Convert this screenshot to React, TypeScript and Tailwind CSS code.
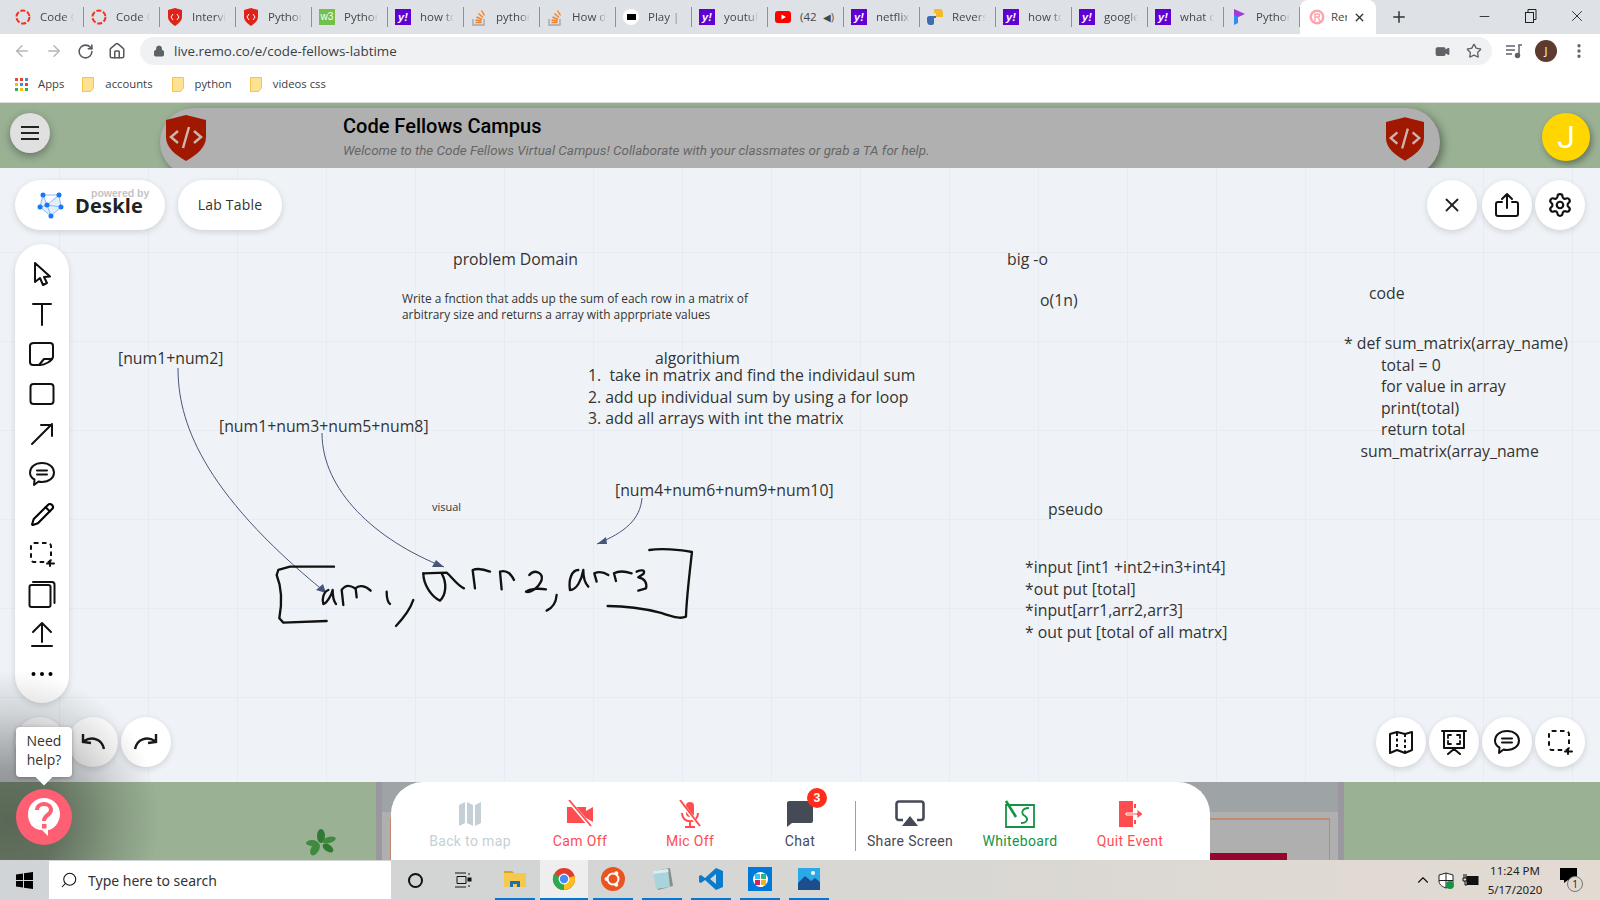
import { ArrowLeft, ArrowRight, ChevronUp, Home, Lock, Minus, MoreVertical, Pencil, Plus, RotateCw, Search, Settings, Star, Video, X } from "lucide-react";

const tabs = [
  { icon: "ring", text: "Code C" },
  { icon: "ring", text: "Code C" },
  { icon: "shield", text: "Intervie" },
  { icon: "shield", text: "Python" },
  { icon: "w3", text: "Python" },
  { icon: "yahoo", text: "how to" },
  { icon: "so", text: "python" },
  { icon: "so", text: "How d" },
  { icon: "play", text: "Play | F" },
  { icon: "yahoo", text: "youtub" },
  { icon: "yt", text: "(42" },
  { icon: "yahoo", text: "netflix" },
  { icon: "py", text: "Revers" },
  { icon: "yahoo", text: "how to" },
  { icon: "yahoo", text: "google" },
  { icon: "yahoo", text: "what d" },
  { icon: "pl", text: "Python" },
];

function Favicon({ kind }: { kind: string }) {
  if (kind === "ring")
    return (
      <svg width="16" height="16" viewBox="0 0 16 16">
        <circle cx="8" cy="8" r="6.5" fill="none" stroke="#f0321e" strokeWidth="2" strokeDasharray="5 1.8" />
      </svg>
    );
  if (kind === "shield")
    return (
      <svg width="16" height="18" viewBox="0 0 16 18">
        <path d="M8 0 L15 2 V9 C15 13 11 16 8 18 C5 16 1 13 1 9 V2 Z" fill="#e0231a" />
        <path d="M6 6 L4 9 L6 12 M10 6 L12 9 L10 12" fill="none" stroke="#fff" strokeWidth="1" />
      </svg>
    );
  if (kind === "w3")
    return (
      <div className="flex h-4 w-4 items-center justify-center bg-[#73c04d] font-['Liberation_Sans',sans-serif] text-[10px] leading-none text-white">w3</div>
    );
  if (kind === "yahoo")
    return <div className="flex h-4 w-4 items-center justify-center bg-[#5f01d1] font-['Liberation_Sans',sans-serif] text-[11px] font-bold italic leading-none text-white">y!</div>;
  if (kind === "so")
    return (
      <svg width="16" height="17" viewBox="0 0 16 17" fill="none">
        <path d="M2 10 V16 H13 V10" stroke="#a8a7a5" strokeWidth="1.4" />
        <path d="M4.5 13.5 H10.5 M4.5 11 L10.5 12 M5.5 8 L11 10.5 M7.5 4.5 L12 8.5 M10.5 1.5 L13.5 6.5" stroke="#f48024" strokeWidth="1.4" />
      </svg>
    );
  if (kind === "play")
    return (
      <div className="flex h-4 w-4 items-center justify-center rounded-full bg-white">
        <div className="h-[6px] w-[9px] bg-black" />
      </div>
    );
  if (kind === "yt")
    return (
      <svg width="16" height="16" viewBox="0 0 16 16">
        <rect x="0" y="2" width="16" height="12" rx="3" fill="#f00" />
        <path d="M6.5 5.5 L11 8 L6.5 10.5 Z" fill="#fff" />
      </svg>
    );
  if (kind === "py")
    return (
      <svg width="16" height="18" viewBox="0 0 16 18">
        <path d="M8 1 H13 C15 1 16 3 16 5 V9 H9 V5 H7 V3 C7 2 7 1 8 1 Z" fill="#f2b92c" />
        <path d="M2 8 H9 V10 H7 V15 C7 16 6 17 5 17 H3 C1 17 0 15 0 13 V10 C0 9 1 8 2 8 Z" fill="#3d6fb0" />
      </svg>
    );
  if (kind === "pl")
    return (
      <svg width="14" height="18" viewBox="0 0 14 18">
        <path d="M2 1 L13 6 L2 11 Z" fill="#a43bd8" />
        <path d="M2 7 L6 9 V15 L2 17 Z" fill="#2d8cf0" />
      </svg>
    );
  return (
    <svg width="16" height="16" viewBox="0 0 16 16">
      <circle cx="8" cy="8" r="7.5" fill="#ffa4ad" />
      <circle cx="8" cy="8" r="5" fill="#fff" />
      <path d="M6 12 V5 H9 C11 5 11 8 9 8 H6 M9 8 L11 12" fill="none" stroke="#ffa4ad" strokeWidth="1.4" />
    </svg>
  );
}

function Folder() {
  return (
    <svg width="12" height="15" viewBox="0 0 12 15">
      <path d="M0.5 0.5 H11.5 V11 L8.5 14.5 H0.5 Z" fill="#fde293" stroke="#f6c544" />
    </svg>
  );
}

function AppsGrid() {
  const colors = ["#ea4335", "#ea4335", "#4285f4", "#fbbc05", "#4285f4", "#ea4335", "#34a853", "#fbbc05", "#34a853"];
  return (
    <div className="grid grid-cols-3 gap-[2px]">
      {colors.map((c, i) => (
        <div key={i} className="h-[3px] w-[3px]" style={{ backgroundColor: c }} />
      ))}
    </div>
  );
}

function CodeShield({ className }: { className: string }) {
  return (
    <svg className={className} viewBox="0 0 40 46">
      <path d="M20 0 L40 5 V22 C40 33 30 40 20 46 C10 40 0 33 0 22 V5 Z" fill="#a01800" />
      <path d="M12 16 L5 22 L12 28 M28 16 L35 22 L28 28 M23 12 L17 33" fill="none" stroke="#c8b5ae" strokeWidth="2.5" />
    </svg>
  );
}

function DeskleLogo() {
  const dots = [[6, 3], [22, 3], [3, 15], [10, 13], [24, 15], [14, 24]];
  return (
    <svg width="27" height="27" viewBox="0 0 27 27">
      <path d="M6 3 H22 L24 15 L14 24 L3 15 Z M6 3 L10 13 L22 3 M10 13 L24 15 M10 13 L14 24 M3 15 L10 13" fill="#1877f2" fillOpacity="0.12" stroke="#7fb2f7" strokeWidth="0.9" />
      {dots.map(([x, y]) => (
        <circle key={`${x}-${y}`} cx={x} cy={y} r="2.5" fill="#1877f2" />
      ))}
    </svg>
  );
}

const ink = { fill: "none", stroke: "#111", strokeWidth: 2, strokeLinecap: "round", strokeLinejoin: "round" } as const;

function BubbleIcon() {
  return (
    <svg width="26" height="26" viewBox="0 0 26 26" {...ink}>
      <path d="M13 2 C20 2 25 6 25 11.5 C25 17 20 21 13 21 C12 21 10.5 21 9.5 20.5 L5 24 L5.5 18.5 C2.5 17 1 14.5 1 11.5 C1 6 6 2 13 2 Z" />
      <path d="M8 9.5 H18 M8 13.5 H18" />
    </svg>
  );
}

function DashedPlusIcon() {
  return (
    <svg width="26" height="26" viewBox="0 0 26 26" {...ink}>
      <rect x="2" y="2" width="20" height="19" rx="3" strokeDasharray="4.5 3.5" strokeLinecap="butt" />
      <path d="M21 21 V26 M18 23.5 H25" strokeWidth="2" transform="translate(0 -1)" />
    </svg>
  );
}

function ToolIcon({ kind }: { kind: string }) {
  switch (kind) {
    case "cursor":
      return (
        <svg width="26" height="26" viewBox="0 0 26 26" {...ink}>
          <path d="M6 2 V21 L11 17 L14 24 L18 22 L15 16 L21 15.5 Z" />
        </svg>
      );
    case "text":
      return (
        <svg width="26" height="26" viewBox="0 0 26 26" {...ink}>
          <path d="M4 3 H22 M13 3 V24" />
        </svg>
      );
    case "note":
      return (
        <svg width="26" height="26" viewBox="0 0 26 26" {...ink}>
          <path d="M5 2 H21 C23 2 24 3 24 5 V16 C23 20 16 24 11 24 H4 C2 24 1 23 1 21 V5 C1 3 3 2 5 2 Z" />
          <path d="M10 24 L15 18 L23 18" />
        </svg>
      );
    case "rect":
      return (
        <svg width="26" height="26" viewBox="0 0 26 26" {...ink}>
          <rect x="1.5" y="3" width="23" height="20" rx="3" />
        </svg>
      );
    case "arrow":
      return (
        <svg width="26" height="26" viewBox="0 0 26 26" {...ink}>
          <path d="M3 23 L23 3 M12 4 H23 V15" />
        </svg>
      );
    case "bubble":
      return <BubbleIcon />;
    case "pencil":
      return <Pencil size={25} strokeWidth={2} className="text-black" />;
    case "dashed":
      return <DashedPlusIcon />;
    case "layers":
      return (
        <svg width="28" height="28" viewBox="0 0 28 28" {...ink}>
          <rect x="1.5" y="5" width="21" height="22" rx="2" />
          <path d="M5 2 H24 C25.5 2 26.5 3 26.5 4.5 V23" />
        </svg>
      );
    case "upload":
      return (
        <svg width="26" height="26" viewBox="0 0 26 26" {...ink}>
          <path d="M13 2 V21 M4 11 L13 2 L22 11 M3 25 H23" />
        </svg>
      );
    default:
      return (
        <svg width="22" height="6" viewBox="0 0 22 6">
          <circle cx="2.5" cy="3" r="2" />
          <circle cx="11" cy="3" r="2" />
          <circle cx="19.5" cy="3" r="2" />
        </svg>
      );
  }
}

const tools = ["cursor", "text", "note", "rect", "arrow", "bubble", "pencil", "dashed", "layers", "upload", "dots"];

function CircleButton({ children, className = "" }: { children?: React.ReactNode; className?: string }) {
  return <div className={`flex h-[50px] w-[50px] items-center justify-center rounded-full bg-white shadow-[0_2px_6px_rgba(0,0,0,0.14)] ${className}`}>{children}</div>;
}

function Handwriting() {
  return (
    <svg className="pointer-events-none absolute left-0 top-0 h-[614px] w-[1600px]" viewBox="0 168 1600 614">
      <g fill="none" stroke="#475579" strokeWidth="1">
        <path d="M178 368 C178 420 200 490 325 592" />
        <path d="M322 433 C322 490 375 540 444 567" />
        <path d="M642 498 C640 520 625 532 597 544" />
      </g>
      <g fill="#475579">
        <path d="M326 593 L316 590 L323 584 Z" />
        <path d="M444 567 L432 567 L436 560 Z" />
        <path d="M597 544 L606 537 L607 544 Z" />
      </g>
      <g transform="translate(260 520) scale(0.3333)" fill="none" stroke="#111" strokeWidth="7" strokeLinecap="round" strokeLinejoin="round">
        <path d="M222 140 L90 140 L55 150 L50 165 C60 190 70 230 58 295 L70 308 L200 303" />
        <path d="M205 210 C190 215 185 240 190 252 C200 250 215 225 218 210 C218 225 222 245 228 252" />
        <path d="M250 255 L245 210 C255 195 270 195 285 205" />
        <path d="M290 232 L287 205 C295 195 315 195 332 212" />
        <path d="M380 215 C380 230 382 245 390 252" />
        <path d="M460 240 C450 270 430 295 408 318" />
        <path d="M490 160 C490 195 515 230 540 242 C558 225 562 190 545 160" />
        <path d="M490 160 L560 158 C575 170 590 195 612 205" />
        <path d="M645 205 L638 150 C650 145 670 147 690 155" />
        <path d="M725 208 L720 155 C735 150 750 155 762 180" />
        <path d="M808 165 C825 145 850 160 845 180 C835 205 810 220 798 215 C810 205 840 205 858 208" />
        <path d="M890 225 C888 250 875 265 860 272" />
        <path d="M955 150 C935 150 925 180 930 210 C950 210 965 180 970 150 C970 170 975 190 985 200" />
        <path d="M1010 185 L1003 160 C1015 155 1030 155 1045 165" />
        <path d="M1068 183 L1062 160 C1080 150 1100 155 1115 160" />
        <path d="M1130 155 C1145 148 1158 150 1150 162 L1135 172 C1155 175 1162 190 1158 205 L1135 212" />
        <path d="M1168 90 C1200 85 1260 88 1296 96 C1290 150 1280 230 1278 290 C1260 298 1240 290 1200 278 C1150 265 1090 258 1043 258" />
      </g>
    </svg>
  );
}

function DockItem({ label, color, children, divider }: { label: string; color: string; children: React.ReactNode; divider?: boolean }) {
  return (
    <div className={`relative flex h-full w-[110px] flex-col items-center pt-[17px] ${color}`}>
      <div className="flex h-[30px] items-center justify-center">{children}</div>
      <div className="mt-[3px] whitespace-nowrap text-[14px] leading-[18px] tracking-[0.35px]">{label}</div>
      {divider && <div className="absolute -right-[1px] top-[19px] h-[50px] w-px bg-[#9aa0a8]" />}
    </div>
  );
}

export default function App() {
  return (
    <div className="flex h-[900px] w-[1600px] flex-col overflow-hidden bg-white font-['Open_Sans',sans-serif]">
      {/* Tab strip */}
      <div className="flex h-[34px] items-end bg-[#dee1e6] pl-2 text-[11.5px] text-[#45474a]">
        {tabs.map((t, i) => (
          <div key={i} className="flex h-[34px] w-[76px] items-center gap-[9px] pl-[7px]">
            <div className="flex w-4 shrink-0 justify-center">
              <Favicon kind={t.icon} />
            </div>
            <div className={`overflow-hidden whitespace-nowrap ${t.icon === "yt" ? "w-[18px]" : "w-[40px] [mask-image:linear-gradient(to_right,black_70%,transparent)]"}`}>{t.text}</div>
            {t.icon === "yt" && <span className="-ml-[4px] text-[10px]">◀)</span>}
            <div className="ml-auto h-[20px] w-px shrink-0 bg-[#8f9296]" />
          </div>
        ))}
        <div className="flex h-[34px] w-[76px] items-center gap-[6px] rounded-t-lg bg-white pl-[9px]">
          <Favicon kind="remo" />
          <div className="w-[16px] overflow-hidden whitespace-nowrap">Rer</div>
          <X size={13} strokeWidth={2.5} className="text-[#333]" />
        </div>
        <Plus size={18} strokeWidth={2} className="mb-2 ml-[14px] text-[#333]" />
        <div className="ml-[69px] flex items-center gap-[31px] self-start pt-[7px] text-[#222]">
          <Minus size={15} strokeWidth={1.4} />
          <svg width="14" height="14" viewBox="0 0 14 14" fill="none" stroke="currentColor">
            <rect x="2.5" y="3.5" width="8" height="10" />
            <path d="M5 3 V0.5 H13 V10.5 H11" />
          </svg>
          <X size={18} strokeWidth={1.2} />
        </div>
      </div>

      {/* Address bar */}
      <div className="flex h-[34px] items-center bg-white">
        <div className="flex w-[140px] items-center gap-[14px] pl-[13px]">
          <ArrowLeft size={18} className="text-[#b4b7bb]" />
          <ArrowRight size={18} className="text-[#b4b7bb]" />
          <RotateCw size={17} strokeWidth={2.2} className="text-[#55585c]" />
          <Home size={18} strokeWidth={2} className="text-[#55585c]" />
        </div>
        <div className="flex h-[28px] w-[1352px] items-center rounded-full bg-[#eff1f3] pl-[13px] pr-[10px]">
          <Lock size={12} fill="#5f6368" className="text-[#5f6368]" />
          <div className="ml-[9px] pt-[1px] text-[13.4px] text-[#3c4043]">live.remo.co/e/code-fellows-labtime</div>
          <Video size={15} fill="#5f6368" className="ml-auto text-[#5f6368]" />
          <Star size={16} strokeWidth={2} className="ml-[16px] text-[#5f6368]" />
        </div>
        <svg className="ml-[13px]" width="18" height="16" viewBox="0 0 18 16" fill="none" stroke="#5f6368" strokeWidth="1.5">
          <path d="M1 3 H10 M1 7 H10 M1 11 H7 M14 12 V2 H17" />
          <circle cx="12.5" cy="12.5" r="2" fill="#5f6368" />
        </svg>
        <div className="ml-[12px] flex h-[22px] w-[22px] items-center justify-center rounded-full bg-[#5d3a2e] text-[11px] text-white">J</div>
        <MoreVertical size={18} strokeWidth={2.4} className="ml-[13px] text-[#5f6368]" />
      </div>

      {/* Bookmarks */}
      <div className="flex h-[34px] items-center bg-white pb-[2px] pl-[15px] text-[11.3px] text-[#3c4043]">
        <AppsGrid />
        <span className="ml-[10px]">Apps</span>
        <div className="ml-[18px]"><Folder /></div>
        <span className="ml-[11px]">accounts</span>
        <div className="ml-[19px]"><Folder /></div>
        <span className="ml-[11px]">python</span>
        <div className="ml-[18px]"><Folder /></div>
        <span className="ml-[11px]">videos css</span>
      </div>

      {/* Page */}
      <div className="relative flex flex-1 flex-col overflow-hidden border-t border-[#d9dcd9]">
        <header className="flex h-[65px] items-start bg-[#9ab194] font-['Roboto',sans-serif]">
          <div className="ml-[10px] mt-[10px] flex h-10 w-10 items-center justify-center rounded-full bg-[#e0e0e0] shadow-[0_3px_8px_rgba(0,0,0,0.35)]">
            <div className="flex w-[18px] flex-col gap-[4px]">
              <div className="h-[2px] bg-[#222]" />
              <div className="h-[2px] bg-[#222]" />
              <div className="h-[2px] bg-[#222]" />
            </div>
          </div>
          <div className="relative ml-[110px] mt-[5px] flex h-[68px] w-[1280px] items-start rounded-[34px] bg-[#b0b0b0] shadow-[3px_3px_8px_rgba(0,0,0,0.4)]">
            <CodeShield className="ml-[6px] mt-[7px] h-[46px] w-[40px]" />
            <div className="ml-[137px] pt-[4px]">
              <div className="text-[20px] font-medium leading-[28px] text-black">Code Fellows Campus</div>
              <div className="mt-[2px] text-[13.4px] italic leading-[18px] text-[#666]">Welcome to the Code Fellows Virtual Campus! Collaborate with your classmates or grab a TA for help.</div>
            </div>
            <CodeShield className="absolute left-[1226px] top-[9px] h-[44px] w-[38px]" />
          </div>
          <div className="ml-[102px] mt-[10px] flex h-12 w-12 items-center justify-center rounded-full bg-[#ffd600] text-[32px] text-white shadow-[2px_3px_6px_rgba(0,0,0,0.35)]">J</div>
        </header>

        {/* Whiteboard canvas */}
        <div className="relative h-[614px] bg-[#eff3f7] bg-[linear-gradient(to_right,#e7ebf3_1px,transparent_1px),linear-gradient(to_bottom,#e7ebf3_1px,transparent_1px)] bg-[size:89px_89px] bg-[position:59px_-5px] text-[15.8px] leading-[22px] text-[#333]">
          <Handwriting />

          <div className="absolute left-[453px] top-[80px]">problem Domain</div>
          <div className="absolute left-[1007px] top-[80px]">big -o</div>
          <div className="absolute left-[1040px] top-[121px]">o(1n)</div>
          <div className="absolute left-[1369px] top-[114px]">code</div>
          <div className="absolute left-[402px] top-[122px] w-[370px] text-[11.86px] leading-[16px]">
            Write a fnction that adds up the sum of each row in a matrix of arbitrary size and returns a array with apprpriate values
          </div>
          <div className="absolute left-[118px] top-[179px]">[num1+num2]</div>
          <div className="absolute left-[219px] top-[247px]">[num1+num3+num5+num8]</div>
          <div className="absolute left-[615px] top-[311px]">[num4+num6+num9+num10]</div>
          <div className="absolute left-[432px] top-[331px] text-[11px] leading-[16px]">visual</div>
          <div className="absolute left-[655px] top-[179px]">algorithium</div>
          <div className="absolute left-[588px] top-[197px] whitespace-pre leading-[21.6px]">
            {"1.  take in matrix and find the individaul sum\n2. add up individual sum by using a for loop\n3. add all arrays with int the matrix"}
          </div>
          <div className="absolute left-[1048px] top-[330px]">pseudo</div>
          <div className="absolute left-[1025px] top-[389px] whitespace-pre leading-[21.6px]">
            {"*input [int1 +int2+in3+int4]\n*out put [total]\n*input[arr1,arr2,arr3]\n* out put [total of all matrx]"}
          </div>
          <div className="absolute left-[1344px] top-[165px] whitespace-pre leading-[21.6px]">
            {"* def sum_matrix(array_name)\n         total = 0\n         for value in array\n         print(total)\n         return total\n    sum_matrix(array_name"}
          </div>

          {/* Top left pills */}
          <div className="absolute left-[15px] top-[12px] flex h-[50px] gap-[13px]">
            <div className="relative flex w-[150px] items-center rounded-full bg-white pl-[22px] shadow-[0_2px_6px_rgba(0,0,0,0.14)]">
              <DeskleLogo />
              <div className="ml-[11px] pt-[2px] text-[20px] font-bold leading-[26px] tracking-[0.2px] text-[#222]">Deskle</div>
              <div className="absolute left-[76px] top-[8px] font-['Liberation_Sans',sans-serif] text-[10.5px] font-bold leading-[10px] text-[#c4c4c4]">powered by</div>
            </div>
            <div className="flex w-[104px] items-center justify-center rounded-full bg-white text-[14px] tracking-[0.2px] text-[#333] shadow-[0_2px_6px_rgba(0,0,0,0.14)]">Lab Table</div>
          </div>

          {/* Top right buttons */}
          <div className="absolute left-[1427px] top-[12px] flex gap-[5px]">
            <CircleButton>
              <X size={22} strokeWidth={2} className="text-[#222]" />
            </CircleButton>
            <CircleButton>
              <svg width="26" height="26" viewBox="0 0 26 26" {...ink}>
                <path d="M13 16 V2 M8 7 L13 2 L18 7 M8 10 H4 C2.5 10 2 11 2 12 V22 C2 23.5 3 24 4 24 H22 C23 24 24 23.5 24 22 V12 C24 11 23.5 10 22 10 H18" />
              </svg>
            </CircleButton>
            <CircleButton className="-ml-[2px]">
              <Settings size={26} strokeWidth={2} className="text-[#111]" />
            </CircleButton>
          </div>

          {/* Toolbar */}
          <div className="absolute left-[15px] top-[76px] flex h-[459px] w-[54px] flex-col items-center rounded-[27px] bg-white pt-[10px] shadow-[0_2px_6px_rgba(0,0,0,0.14)]">
            {tools.map((t) => (
              <div key={t} className="flex h-[40px] w-full shrink-0 items-center justify-center">
                <ToolIcon kind={t} />
              </div>
            ))}
          </div>

          {/* Undo / redo */}
          <div className="absolute left-[15px] top-[549px] flex gap-[3px]">
            <CircleButton />
            <CircleButton>
              <svg width="26" height="18" viewBox="0 0 26 18" fill="none" stroke="#1a1a1a" strokeWidth="2.4">
                <path d="M24 16 C22 6 12 3 4 8 M3 1 L3 9 L11 10" />
              </svg>
            </CircleButton>
            <CircleButton>
              <svg width="26" height="18" viewBox="0 0 26 18" fill="none" stroke="#1a1a1a" strokeWidth="2.4">
                <path d="M2 16 C4 6 14 3 22 8 M23 1 L23 9 L15 10" />
              </svg>
            </CircleButton>
          </div>

          {/* Bottom right buttons */}
          <div className="absolute left-[1376px] top-[549px] flex gap-[3px]">
            <CircleButton>
              <svg width="26" height="26" viewBox="0 0 26 26" {...ink}>
                <path d="M2 5 L9 3 L17 5 L24 3 V21 L17 24 L9 21 L2 24 Z" />
                <path d="M9 4 V21 M17 5 V24" strokeDasharray="3 2.5" strokeLinecap="butt" />
              </svg>
            </CircleButton>
            <CircleButton>
              <svg width="26" height="26" viewBox="0 0 26 26" {...ink}>
                <path d="M1 2 H25 M3 2 V19 H23 V2 M13 19 V21 M7 25 L13 20 L19 25" />
                <path d="M7 9 V6 H10 M16 6 H19 V9 M19 12 V15 H16 M10 15 H7 V12" strokeWidth="1.8" />
              </svg>
            </CircleButton>
            <CircleButton>
              <BubbleIcon />
            </CircleButton>
            <CircleButton>
              <DashedPlusIcon />
            </CircleButton>
          </div>
        </div>

        {/* Room seen behind the dock */}
        <div className="relative flex h-[78px] bg-[#9ab194]">
          <div className="ml-[376px] flex w-[968px]">
            <div className="w-[6px] bg-[#9a97a0]" />
            <div className="flex flex-1 flex-col bg-[#afafaf]">
              <div className="h-[30px] bg-[#9ea3a5]" />
              <div className="relative flex-1">
                <div className="ml-[8px] mr-[8px] mt-[6px] h-full border-x border-t-2 border-[#c08a72]" />
                <div className="absolute bottom-0 left-[828px] h-[7px] w-[77px] bg-[#96052e]" />
              </div>
            </div>
            <div className="w-[6px] bg-[#9a97a0]" />
          </div>
          <svg className="absolute left-[304px] top-[46px]" width="32" height="30" viewBox="0 0 32 30">
            <g fill="#3f8a3e">
              <ellipse cx="17" cy="8" rx="4" ry="7" fill="#2f7a34" />
              <ellipse cx="25" cy="12" rx="7" ry="3" transform="rotate(-15 25 12)" />
              <ellipse cx="24" cy="20" rx="6" ry="3.5" transform="rotate(35 24 20)" fill="#2f7a34" />
              <ellipse cx="11" cy="21" rx="4" ry="7" transform="rotate(30 11 21)" />
              <ellipse cx="8" cy="15" rx="6" ry="3" />
            </g>
          </svg>
          <div className="absolute left-[391px] top-0 flex h-[78px] w-[819px] rounded-t-[32px] bg-white pl-[24px] font-['Roboto',sans-serif]">
            <DockItem label="Back to map" color="text-[#c5cfd6]">
              <svg width="26" height="26" viewBox="0 0 26 26">
                <path d="M2 4 L8 1 V22 L2 25 Z M10 1 L16 4 V25 L10 22 Z M18 4 L24 1 V22 L18 25 Z" fill="#c5cfd6" />
              </svg>
            </DockItem>
            <DockItem label="Cam Off" color="text-[#ff4d4f]">
              <svg width="28" height="28" viewBox="0 0 28 28">
                <path d="M1 7 H20 V11 L27 7 V22 L20 18 V23 H1 Z" fill="#ff4d4f" />
                <path d="M3 1 L25 27" stroke="#fff" strokeWidth="3.5" />
                <path d="M3 0 L25 26" stroke="#ff4d4f" strokeWidth="1.8" />
              </svg>
            </DockItem>
            <DockItem label="Mic Off" color="text-[#ff4d4f]">
              <svg width="28" height="28" viewBox="0 0 28 28" fill="none" stroke="#ff4d4f" strokeWidth="2">
                <rect x="10" y="2" width="8" height="15" rx="4" fill="#ff4d4f" stroke="none" />
                <path d="M6 13 C6 24 22 24 22 13 M14 21 V27 M9 27 H19" />
                <path d="M4 1 L24 27" stroke="#fff" strokeWidth="3.5" />
                <path d="M4 0 L24 26" />
              </svg>
            </DockItem>
            <DockItem label="Chat" color="text-[#454a57]" divider>
              <svg width="28" height="28" viewBox="0 0 28 28">
                <path d="M3 1 H25 C26 1 27 2 27 3 V21 C27 22 26 23 25 23 H6 L1 27 V3 C1 2 2 1 3 1 Z" fill="#454a57" />
              </svg>
              <div className="absolute left-[62px] top-[6px] flex h-5 w-5 items-center justify-center rounded-full bg-[#ff2d1a] text-[12px] font-bold text-white">3</div>
            </DockItem>
            <DockItem label="Share Screen" color="text-[#454a57]">
              <svg width="30" height="28" viewBox="0 0 30 28">
                <path d="M8 20 H4 C2.5 20 1.5 19 1.5 17.5 V4 C1.5 2.5 2.5 1.5 4 1.5 H26 C27.5 1.5 28.5 2.5 28.5 4 V17.5 C28.5 19 27.5 20 26 20 H22" fill="none" stroke="#454a57" strokeWidth="2.6" />
                <path d="M15 16 L23 26 H7 Z" fill="#454a57" />
              </svg>
            </DockItem>
            <DockItem label="Whiteboard" color="text-[#159447]">
              <svg width="32" height="28" viewBox="0 0 32 28" fill="none" stroke="#159447" strokeWidth="1.8">
                <path d="M2 5 H30 V27 H2 Z" />
                <path d="M2 1 L12 17" strokeWidth="2.6" />
                <path d="M25 8 C17 8 17 14 21 16 C25 19 23 23 17 23" />
              </svg>
            </DockItem>
            <DockItem label="Quit Event" color="text-[#ff4d4f]">
              <svg width="28" height="28" viewBox="0 0 28 28" fill="#ff4d4f">
                <path d="M3 1 H17 V27 H3 Z" />
                <path d="M18 4 H20 V8 H18 Z M18 20 H20 V24 H18 Z" />
                <path d="M10 13 H21 V9 L27 14 L21 19 V15 H10 Z" stroke="#fff" strokeWidth="1" />
              </svg>
            </DockItem>
          </div>
        </div>

        {/* Shadow thrown by the help launcher */}
        <div className="pointer-events-none absolute bottom-0 left-0 h-[200px] w-[180px] bg-[radial-gradient(circle_at_10px_160px,rgba(0,0,0,0.42),rgba(0,0,0,0.36)_50px,rgba(0,0,0,0.12)_110px,transparent_150px)]" />

        {/* Help launcher */}
        <div className="absolute left-[16px] top-[624px] flex h-[50px] w-[56px] flex-col items-center justify-center rounded-[4px] bg-white pb-[4px] text-[14px] leading-[19px] text-[#333] shadow-[0_1px_4px_rgba(0,0,0,0.3)]">
          <div>Need</div>
          <div>help?</div>
          <div className="absolute -bottom-[6px] left-[22px] h-3 w-3 rotate-45 bg-white" />
        </div>
        <div className="absolute left-[16px] top-[686px] flex h-14 w-14 items-center justify-center rounded-full bg-[#ff5f72]">
          <svg width="34" height="40" viewBox="0 0 34 40">
            <path d="M17 1 C26 1 33 8 33 17 C33 26 26 33 21 33 V39 L15 33 C6 33 1 26 1 17 C1 8 8 1 17 1 Z" fill="#fff" />
            <path d="M10 13 C10 5 24 5 24 13 C24 18 17 18 17 24" fill="none" stroke="#ff5f72" strokeWidth="4" />
            <rect x="15" y="27" width="4.5" height="4.5" fill="#ff5f72" />
          </svg>
        </div>
      </div>

      {/* Windows taskbar */}
      <div className="flex h-[40px] items-center bg-[linear-gradient(to_right,#d1d4d7,#d3d5d4_35%,#e3dbd2)]">
        <div className="flex w-[49px] justify-center">
          <svg width="17" height="17" viewBox="0 0 17 17" fill="#000">
            <path d="M0 2.4 L7 1.4 V8 H0 Z M8 1.2 L17 0 V8 H8 Z M0 9 H7 V15.6 L0 14.6 Z M8 9 H17 V17 L8 15.8 Z" />
          </svg>
        </div>
        <div className="flex h-[38px] w-[342px] items-center bg-white pl-[11px] font-['Noto_Sans',sans-serif] text-[14px] text-[#333]">
          <Search size={18} strokeWidth={1.4} className="-scale-x-100 text-[#111]" />
          <span className="ml-[10px] pt-[1px]">Type here to search</span>
        </div>
        <div className="flex w-[49px] justify-center">
          <div className="h-[15px] w-[15px] rounded-full border-[2.5px] border-[#111]" />
        </div>
        <div className="flex w-[46px] justify-center">
          <svg width="18" height="16" viewBox="0 0 18 16" fill="none" stroke="#111">
            <path d="M1 1 H12 M3 4.5 H12 V11.5 H3 Z M1 15 H12 M15 1 V3 M15 13 V15" />
            <rect x="14" y="6" width="3" height="3" fill="#111" />
          </svg>
        </div>
        <TaskIcon width="w-[40px]" margin="ml-[9px]">
          <svg width="22" height="20" viewBox="0 0 22 20">
            <path d="M0 2 H8 L10 4 H22 V18 H0 Z" fill="#f5c94e" />
            <path d="M0 2 H8 L10 4 H0 Z" fill="#d9a520" />
            <path d="M6 18 V12 H16 V18 H13 V15 H9 V18 Z" fill="#1e6fb8" />
          </svg>
        </TaskIcon>
        <TaskIcon width="w-[48px]" margin="ml-[5px]" active>
          <svg width="24" height="24" viewBox="0 0 24 24">
            <circle cx="12" cy="12" r="11" fill="#e33b2e" />
            <path d="M12 12 L22.5 9 A11 11 0 0 1 12 23 Z" fill="#fbc116" />
            <path d="M12 12 L12 23 A11 11 0 0 1 2 7 Z" fill="#2da94f" />
            <circle cx="12" cy="12" r="5.4" fill="#fff" />
            <circle cx="12" cy="12" r="4.2" fill="#4a8af4" />
          </svg>
        </TaskIcon>
        <TaskIcon width="w-[40px]" margin="ml-[5px]">
          <svg width="24" height="24" viewBox="0 0 24 24">
            <circle cx="12" cy="12" r="12" fill="#e95420" />
            <circle cx="12" cy="12" r="5.5" fill="none" stroke="#fff" strokeWidth="2" />
            <circle cx="5.5" cy="12" r="2" fill="#fff" />
            <circle cx="15.3" cy="6.3" r="2" fill="#fff" />
            <circle cx="15.3" cy="17.7" r="2" fill="#fff" />
          </svg>
        </TaskIcon>
        <TaskIcon width="w-[40px]" margin="ml-[9px]">
          <svg width="24" height="24" viewBox="0 0 24 24">
            <path d="M5 4 L20 1 L23 19 L8 23 Z" fill="#8a8f86" />
            <path d="M3 4 L18 2 L20 20 L6 22 Z" fill="#a9d4dc" />
            <path d="M3 4 L18 2 L18.4 5 L3.5 7 Z" fill="#d9eef0" />
          </svg>
        </TaskIcon>
        <TaskIcon width="w-[40px]" margin="ml-[9px]">
          <svg width="24" height="24" viewBox="0 0 24 24">
            <path d="M17 1 L24 4 V20 L17 23 L6 13 L2 16 L0 15 V9 L2 8 L6 11 Z M17 7 L11 12 L17 17 Z" fill="#0a7ccb" />
          </svg>
        </TaskIcon>
        <TaskIcon width="w-[40px]" margin="ml-[9px]">
          <div className="flex h-6 w-6 items-center justify-center bg-[#0078d7]">
            <div className="grid h-[15px] w-[15px] grid-cols-2 gap-[1px] rounded-full bg-white p-[2px]">
              <div className="bg-[#36c5f0]" />
              <div className="bg-[#2eb67d]" />
              <div className="bg-[#e01e5a]" />
              <div className="bg-[#ecb22e]" />
            </div>
          </div>
        </TaskIcon>
        <TaskIcon width="w-[40px]" margin="ml-[9px]">
          <svg width="22" height="22" viewBox="0 0 22 22">
            <rect width="22" height="22" fill="#2aa9e8" />
            <path d="M0 22 V15 L7 8 L13 13 L17 10 L22 14 V22 Z" fill="#1c4e8f" />
            <circle cx="15" cy="5" r="2" fill="#fff" />
          </svg>
        </TaskIcon>

        <div className="ml-auto flex items-center">
          <ChevronUp size={18} strokeWidth={1.5} className="text-[#111]" />
          <svg className="ml-[6px]" width="16" height="17" viewBox="0 0 16 17">
            <path d="M8 1 L15 3 V9 C15 13 11 15 8 16 C5 15 1 13 1 9 V3 Z" fill="#fff" stroke="#222" />
            <path d="M8 1 V16 M1 8.5 H15" stroke="#222" />
            <circle cx="12" cy="13" r="4" fill="#159447" />
          </svg>
          <svg className="ml-[8px]" width="17" height="14" viewBox="0 0 17 14" fill="none" stroke="#111">
            <rect x="5" y="3.5" width="11" height="8" fill="#111" />
            <path d="M2 1 V5 M4 1 V5 M1 5 H5 V8 H1 Z M3 8 V12 H5" />
          </svg>
          <div className="ml-[7px] w-[58px] text-center font-['Noto_Sans',sans-serif] text-[11.5px] leading-[19px] text-[#222]">
            <div>11:24 PM</div>
            <div>5/17/2020</div>
          </div>
          <div className="relative ml-[16px] mr-[18px] h-[24px] w-[22px]">
            <svg width="18" height="16" viewBox="0 0 18 16" fill="#000">
              <path d="M0 0 H17 V12 H8 L4 15 V12 H0 Z" />
            </svg>
            <div className="absolute left-[7px] top-[8px] flex h-[16px] w-[16px] items-center justify-center rounded-full border border-[#777] bg-[#dfd9d1] text-[10px] leading-none text-[#222]">1</div>
          </div>
        </div>
      </div>
    </div>
  );
}

function TaskIcon({ children, width, margin, active }: { children: React.ReactNode; width: string; margin: string; active?: boolean }) {
  return (
    <div className={`flex h-[40px] flex-col items-center ${width} ${margin} ${active ? "bg-[#eeeeee]" : ""}`}>
      <div className="flex flex-1 items-center justify-center">{children}</div>
      <div className="h-[2px] w-full bg-[#0078d7]" />
    </div>
  );
}
